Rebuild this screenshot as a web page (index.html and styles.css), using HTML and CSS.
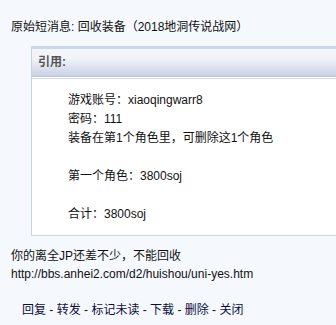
FILE: index.html
```html
<!DOCTYPE html>
<html lang="zh-CN">
<head>
    <meta charset="UTF-8">
    <meta name="viewport" content="width=device-width, initial-scale=1.0">
    <title>短消息</title>
    <link rel="stylesheet" href="styles.css">
</head>
<body>

<div class="message">
    <div class="subject">原始短消息: 回收装备（2018地洞传说战网）</div>

    <div class="quote">
        <div class="quote-head">引用:</div>
        <div class="quote-body">
            游戏账号：xiaoqingwarr8<br>
            密码：111<br>
            装备在第1个角色里，可删除这1个角色<br>
            <br>
            第一个角色：3800soj<br>
            <br>
            合计：3800soj
        </div>
    </div>

    <div class="reply">
        你的离全JP还差不少，不能回收<br>
        http://bbs.anhei2.com/d2/huishou/uni-yes.htm
    </div>

    <div class="actions">
        <a href="#">回复</a> - <a href="#">转发</a> - <a href="#">标记未读</a> - <a href="#">下载</a> - <a href="#">删除</a> - <a href="#">关闭</a>
    </div>
</div>

</body>
</html>
```

FILE: styles.css
```css
body {
    margin: 0;
    background: #f5f9fe;
    font-family: "Liberation Sans", Arial, "Noto Sans CJK SC", sans-serif;
    font-size: 12px;
    color: #111;
}
.message {
    padding: 18px 0 10px 11px;
}
.subject {
    line-height: 18px;
}
.quote {
    margin: 10px 0 0 20px;
    background: #fff;
    border-top: 3px solid #cad8ea;
    border-left: 1px solid #c6d5ea;
    border-bottom: 1px solid #c6d5ea;
}
.quote-head {
    height: 27px;
    line-height: 27px;
    padding-left: 6px;
    font-weight: bold;
    color: #555;
    background: linear-gradient(#f4f6fa 0%, #f1f3f8 35%, #c9d2e5 100%);
    border-bottom: 1px solid #b9c5dc;
    box-shadow: 0 1px 0 #fff, 0 2px 0 #d3dcec;
}
.quote-body {
    padding: 14px 0 11px 36px;
    line-height: 19px;
}
.reply {
    margin-top: 11px;
    line-height: 18px;
}
.actions {
    margin-top: 18px;
    padding-left: 11px;
    line-height: 18px;
}
.actions a {
    color: #0d0d3a;
    text-decoration: none;
}
```
